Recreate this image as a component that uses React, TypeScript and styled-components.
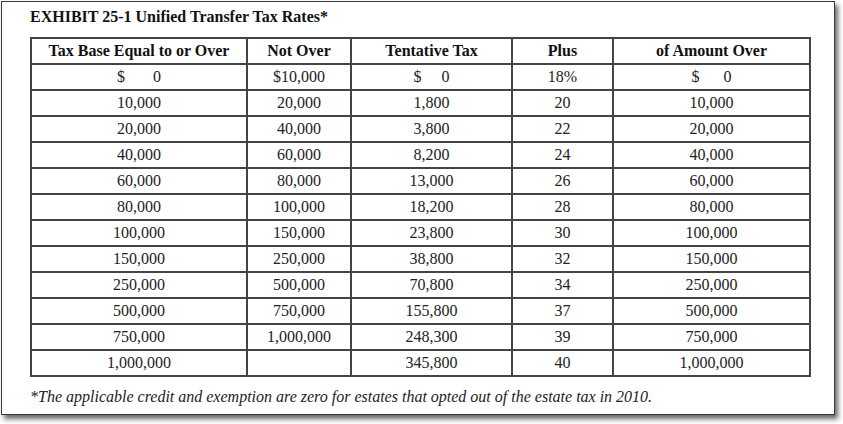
import React from "react";
import styled, { createGlobalStyle } from "styled-components";

const GlobalStyle = createGlobalStyle`
  html, body {
    margin: 0;
    padding: 0;
    background: #ffffff;
    overflow: hidden;
  }
  body {
    font-family: "Liberation Serif", "Times New Roman", serif;
    color: #222;
  }
`;

const Page = styled.div`
  box-sizing: border-box;
  width: 843px;
  height: 424px;
  padding: 1px 0 0 1px;
`;

const Frame = styled.div`
  box-sizing: border-box;
  width: 834px;
  height: 414px;
  padding: 3px 0 0 28px;
  border: 1px solid #3a3a3a;
  background: #fff;
  box-shadow: 3px 4px 5px rgba(0, 0, 0, 0.6);
`;

const Title = styled.div`
  font-size: 16px;
  font-weight: bold;
  line-height: 24px;
  color: #111;
`;

const Table = styled.table`
  margin-top: 8px;
  border-collapse: collapse;
  table-layout: fixed;
  font-size: 16px;
`;

const Th = styled.th<{ $w: number }>`
  width: ${(p) => p.$w}px;
  height: 24px;
  padding: 0;
  border: 2px solid #444;
  font-weight: bold;
  color: #111;
  text-align: center;
  line-height: 24px;
`;

const Td = styled.td`
  height: 24px;
  padding: 0;
  border: 2px solid #444;
  text-align: center;
  line-height: 24px;
  color: #222;
  white-space: pre;
`;

const Note = styled.div`
  margin-top: 9px;
  font-size: 16px;
  font-style: italic;
  line-height: 22px;
  color: #222;
`;

const columns = [
  { label: "Tax Base Equal to or Over", w: 214 },
  { label: "Not Over", w: 102 },
  { label: "Tentative Tax", w: 159 },
  { label: "Plus", w: 99 },
  { label: "of Amount Over", w: 195 },
];

const rows: string[][] = [
  ["$       0", "$10,000", "$     0", "18%", "$      0"],
  ["10,000", "20,000", "1,800", "20", "10,000"],
  ["20,000", "40,000", "3,800", "22", "20,000"],
  ["40,000", "60,000", "8,200", "24", "40,000"],
  ["60,000", "80,000", "13,000", "26", "60,000"],
  ["80,000", "100,000", "18,200", "28", "80,000"],
  ["100,000", "150,000", "23,800", "30", "100,000"],
  ["150,000", "250,000", "38,800", "32", "150,000"],
  ["250,000", "500,000", "70,800", "34", "250,000"],
  ["500,000", "750,000", "155,800", "37", "500,000"],
  ["750,000", "1,000,000", "248,300", "39", "750,000"],
  ["1,000,000", "", "345,800", "40", "1,000,000"],
];

export default function App() {
  return (
    <Page>
      <GlobalStyle />
      <Frame>
        <Title>EXHIBIT 25-1 Unified Transfer Tax Rates*</Title>
        <Table>
          <thead>
            <tr>
              {columns.map((c) => (
                <Th key={c.label} $w={c.w}>
                  {c.label}
                </Th>
              ))}
            </tr>
          </thead>
          <tbody>
            {rows.map((r, i) => (
              <tr key={i}>
                {r.map((cell, j) => (
                  <Td key={j}>{cell}</Td>
                ))}
              </tr>
            ))}
          </tbody>
        </Table>
        <Note>
          *The applicable credit and exemption are zero for estates that opted out of the estate tax in 2010.
        </Note>
      </Frame>
    </Page>
  );
}
